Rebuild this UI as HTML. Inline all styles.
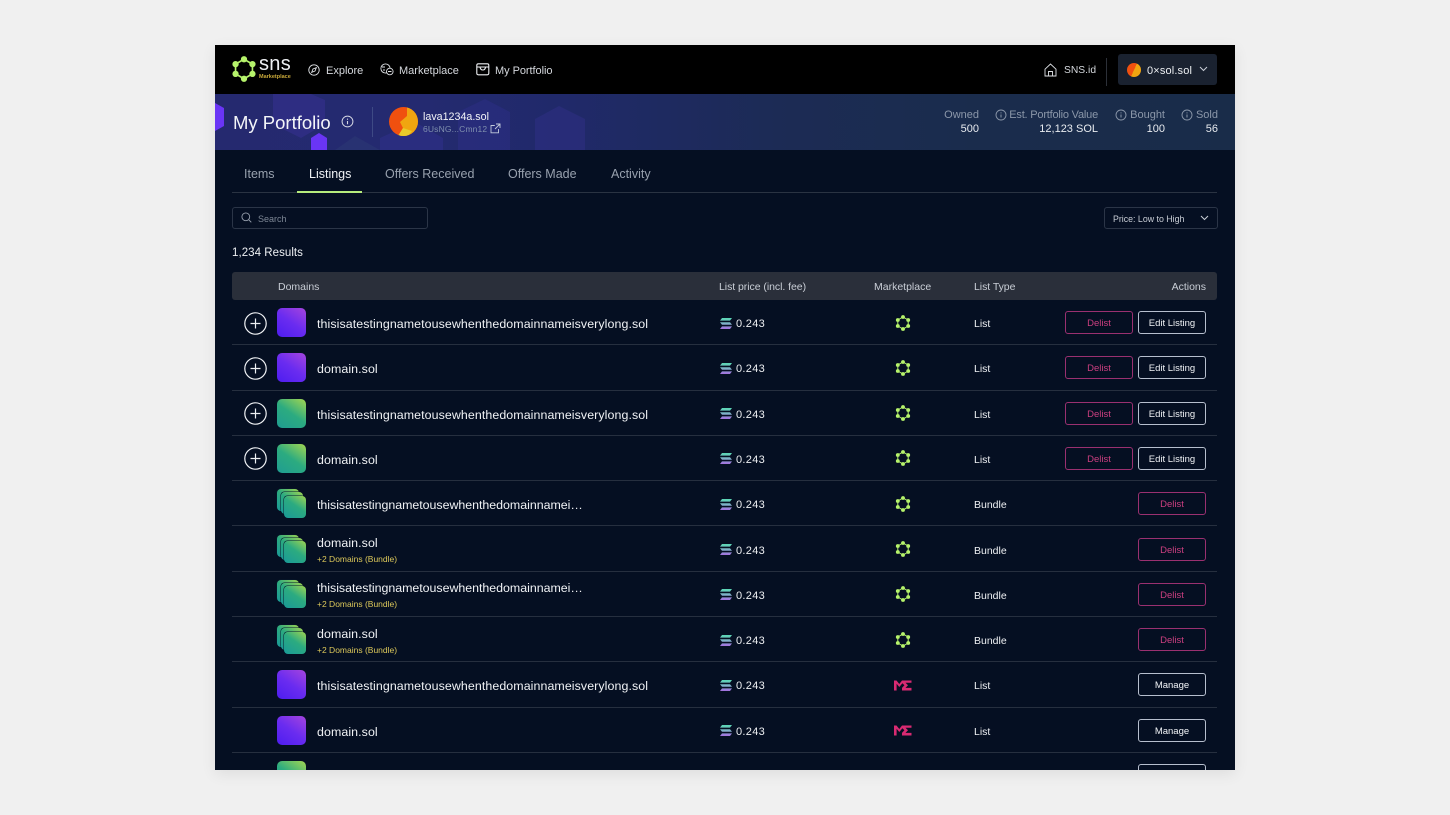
<!DOCTYPE html>
<html><head><meta charset="utf-8"><title>My Portfolio</title>
<style>
*{box-sizing:border-box;margin:0;padding:0}
html,body{width:1450px;height:815px;overflow:hidden;background:#f0f0f0;font-family:"Liberation Sans","DejaVu Sans",sans-serif}
.a{position:absolute;white-space:nowrap}
#p{position:absolute;left:215px;top:45px;width:1019.5px;height:725px;background:#050f22;overflow:hidden;box-shadow:0 4px 14px rgba(0,0,0,.08)}
#w{position:absolute;left:-215px;top:-45px;width:1450px;height:815px}
.nav{font-size:11px;color:#d5d8dd;line-height:14px}
.st{font-size:11px;color:#8b97a9;text-align:right;line-height:13px}
.sv{font-size:11px;color:#e8ebef;text-align:right;line-height:13px}
.tab{font-size:12.5px;color:#98a1ae;line-height:16px}
.th{font-size:10.5px;color:#c9ced6;line-height:14px;top:280px}
.r{position:absolute;left:232px;width:985px;height:45.3px;border-bottom:1.4px solid #262f3f}
.n{position:absolute;left:85px;font-size:12.4px;color:#f0f2f5;white-space:nowrap;line-height:16px;top:16px;letter-spacing:.085px}
.n.t{top:8.500px}
.n.e{letter-spacing:-.02px}
.b{position:absolute;left:85px;top:27.500px;font-size:8.500px;color:#dcc85a;white-space:nowrap;line-height:11px}
.pr{position:absolute;left:504px;top:17px;font-size:11px;color:#eef0f3;line-height:14px;letter-spacing:.3px}
.so{position:absolute;left:488px;top:17.500px;width:12px;height:11px}
.mk{position:absolute;left:663px;top:14.500px;width:16px;height:16px}
.me{position:absolute;left:662px;top:17.500px;width:18px;height:11px}
.ty{position:absolute;left:742px;top:17px;font-size:10.500px;color:#eef0f3;line-height:14px}
.plus{position:absolute;left:11.500px;top:11.500px;width:23px;height:23px}
.th1{position:absolute;left:45px;top:8px;width:29px;height:29px;border-radius:5px}
.pu{background:linear-gradient(35deg,#4d1df0 0%,#6a2cf0 50%,#a545dd 100%)}
.gr{background:linear-gradient(35deg,#1f9d92 0%,#2cab80 50%,#a3d651 100%)}
.s1,.s2,.s3{position:absolute;width:22px;height:22px;border-radius:4px;background:linear-gradient(35deg,#1a9a98 0%,#2cab80 55%,#9ed452 100%);box-shadow:-.5px -.5px 0 #071a2c}
.s1{left:45px;top:8px}.s2{left:48.500px;top:11px}.s3{left:52px;top:14.500px}
.btn{position:absolute;top:11px;height:23px;border-radius:3px;font-size:9.500px;text-align:center;line-height:21px;padding-top:1px;white-space:nowrap}
.de{border:1.200px solid #9a3070;color:#cc3f80}
.ed{border:1.200px solid #b7bfce;color:#f2f4f7}
.d1{left:833px;width:68px}.e1{left:906px;width:68px}
</style></head><body>
<svg width="0" height="0" style="position:absolute">
<defs>
<symbol id="hex" viewBox="0 0 24 24">
<polygon points="12,3 19.800,7.500 19.800,16.500 12,21 4.200,16.500 4.200,7.500" fill="none" stroke="#b6f36b" stroke-width="1.500"/>
<g fill="#b6f36b"><circle cx="12" cy="3" r="2.900"/><circle cx="19.800" cy="7.500" r="2.900"/><circle cx="19.800" cy="16.500" r="2.900"/><circle cx="12" cy="21" r="2.900"/><circle cx="4.200" cy="16.500" r="2.900"/><circle cx="4.200" cy="7.500" r="2.900"/></g>
</symbol>
<symbol id="me" viewBox="0 0 18 11">
<path d="M0 10.500V.5h2.500L5.300 4 8 .5h9.500v2.200H11.500L14 5.300 11.500 7.900h6v2.600H8V7.900L10.400 5.300 8.400 3.200 5.300 7 2.600 3.800v6.700z" fill="#d92a72"/>
</symbol>
<linearGradient id="sg" x1="0" y1="0" x2="0" y2="1"><stop offset="0" stop-color="#5ad8b4"/><stop offset=".5" stop-color="#7fb3c8"/><stop offset="1" stop-color="#a56fe0"/></linearGradient>
<symbol id="sol" viewBox="0 0 12 11">
<path d="M2 0h10l-2 2.600H0zM0 4.200h10l2 2.600H2zM2 8.400h10l-2 2.600H0z" fill="url(#sg)"/>
</symbol>
<symbol id="pl" viewBox="0 0 23 23">
<circle cx="11.500" cy="11.500" r="10.700" fill="none" stroke="#eef0f3" stroke-width="1.200"/>
<path d="M11.500 6.500v10M6.500 11.500h10" stroke="#eef0f3" stroke-width="1.200" fill="none"/>
</symbol>
<symbol id="inf" viewBox="0 0 12 12">
<circle cx="6" cy="6" r="5" fill="none" stroke="currentColor" stroke-width=".9"/>
<path d="M6 5.500v3M6 3.400v1" stroke="currentColor" stroke-width="1" fill="none"/>
</symbol>
</defs></svg>

<div id="p"><div id="w">
<!-- top bar -->
<div class="a" style="left:215px;top:45px;width:1020px;height:49px;background:#000"></div>
<svg class="a" style="left:231px;top:56px" width="26" height="26"><use href="#hex" width="26" height="26"/></svg>
<div class="a" style="left:259px;top:53px;font-size:20px;color:#eef0f3;line-height:22px;letter-spacing:.3px">sns</div>
<div class="a" style="left:259px;top:72.500px;font-size:5.500px;color:#c9a93a;line-height:8px;font-weight:bold">Marketplace</div>
<svg class="a" style="left:308px;top:64px" width="12" height="12" viewBox="0 0 12 12" fill="none" stroke="#dfe2e6" stroke-width=".9"><circle cx="6" cy="6" r="5.200"/><path d="M8.300 3.700L7 7 3.700 8.300 5 5z"/></svg>
<div class="a nav" style="left:326px;top:63.500px">Explore</div>
<svg class="a" style="left:380px;top:63px" width="14" height="13" viewBox="0 0 14 13" fill="none" stroke="#dfe2e6" stroke-width=".9"><circle cx="5.500" cy="5.500" r="4.600"/><circle cx="9.800" cy="8.500" r="3.300" fill="#000"/><path d="M8 8.500h3.500M2 4h3M3 7h2"/></svg>
<div class="a nav" style="left:399px;top:63.500px">Marketplace</div>
<svg class="a" style="left:476px;top:63px" width="14" height="13" viewBox="0 0 14 13" fill="none" stroke="#eef0f3" stroke-width="1.100"><rect x=".8" y=".8" width="12" height="11" rx="1.500"/><path d="M.8 4h12M4 4.200c.5 2 1.500 2.800 2.800 2.800s2.300-.8 2.800-2.800"/></svg>
<div class="a nav" style="left:495px;top:63.500px;letter-spacing:-.05px">My Portfolio</div>
<svg class="a" style="left:1044px;top:63px" width="13" height="14" viewBox="0 0 13 14" fill="none" stroke="#dfe2e6" stroke-width=".9"><path d="M1 6.200L6.500 1 12 6.200V13H1zM4.500 13V8.500h4V13"/></svg>
<div class="a nav" style="left:1064px;top:63.500px;font-size:10.300px">SNS.id</div>
<div class="a" style="left:1106px;top:58px;width:1px;height:28px;background:#2c3038"></div>
<div class="a" style="left:1118px;top:54px;width:99px;height:31px;border-radius:3px;background:#1a2230"></div>
<div class="a" style="left:1127px;top:63px;width:14px;height:14px;border-radius:50%;background:linear-gradient(115deg,#f0500f 50%,#f0a510 50%)"></div>
<div class="a nav" style="left:1147px;top:63.500px;color:#eef0f3;letter-spacing:.15px">0×sol.sol</div>
<svg class="a" style="left:1199px;top:66px" width="9" height="6" viewBox="0 0 9 6" fill="none" stroke="#c9ced6" stroke-width="1"><path d="M1 1l3.500 3.500L8 1"/></svg>

<!-- banner -->
<div class="a" style="left:215px;top:94px;width:1020px;height:56px;overflow:hidden;background:linear-gradient(90deg,#25296f 0%,#242a70 20%,#20296a 34%,#1c2b55 55%,#1a2c4c 75%,#192c49 100%)">
<svg width="1020" height="56" style="position:absolute;left:0;top:0">
<polygon points="-8,14 0,9 9,14 9,32 0,37 -8,32" fill="#6a35f5"/>
<polygon points="58,0 96,0 110,6 110,30 86,44 58,30" fill="#35308f" opacity=".6"/>
<polygon points="96,44 104,39 112,44 112,56 96,56" fill="#6a35f5"/>
<polygon points="165,44 200,28 228,44 228,56 165,56" fill="#333192" opacity=".45"/>
<polygon points="243,18 270,5 295,18 295,56 243,56" fill="#2f2f8a" opacity=".45"/>
<polygon points="320,25 344,12 370,25 370,56 320,56" fill="#34328f" opacity=".4"/>
<polygon points="120,56 140,42 165,56" fill="#2c3a74" opacity=".5"/>
</svg>
</div>
<div class="a" style="left:233px;top:112px;font-size:18.500px;color:#f3f5f8;line-height:22px">My Portfolio</div>
<svg class="a" style="left:341px;top:115px;color:#d5d8e4" width="13" height="13"><use href="#inf" width="13" height="13"/></svg>
<div class="a" style="left:372px;top:107px;width:1px;height:30px;background:#3e4a85"></div>
<div class="a" style="left:389px;top:107px;width:29px;height:29px;border-radius:50%;overflow:hidden;background:#f0500f">
<svg width="29" height="29"><path d="M18 0L29 0V29H9L14 21 11 15 18 9z" fill="#f0a510"/><path d="M9 29L14 21 23 24 19 29z" fill="#e8cb2a"/></svg></div>
<div class="a" style="left:423px;top:110px;font-size:10.700px;color:#f3f5f8;line-height:14px">lava1234a.sol</div>
<div class="a" style="left:423px;top:123px;font-size:8.500px;color:#7f8fae;line-height:12px;letter-spacing:.15px">6UsNG...Cmn12</div>
<svg class="a" style="left:490px;top:123px" width="11" height="11" viewBox="0 0 11 11" fill="none" stroke="#c3cbdc" stroke-width=".9"><path d="M8.500 6v3.800H1V2.500h3.800M6 1h4v4M10 1L5 6"/></svg>

<div class="a st" style="right:471px;top:109px">Owned</div><div class="a sv" style="right:471px;top:123px">500</div>
<div class="a st" style="right:352px;top:109px;letter-spacing:-.2px">Est. Portfolio Value</div><div class="a sv" style="right:352px;top:123px">12,123 SOL</div>
<svg class="a" style="left:995px;top:109px;color:#8b97a9" width="12" height="12"><use href="#inf" width="12" height="12"/></svg>
<div class="a st" style="right:285px;top:109px">Bought</div><div class="a sv" style="right:285px;top:123px">100</div>
<svg class="a" style="left:1115px;top:109px;color:#8b97a9" width="12" height="12"><use href="#inf" width="12" height="12"/></svg>
<div class="a st" style="right:232px;top:109px">Sold</div><div class="a sv" style="right:232px;top:123px">56</div>
<svg class="a" style="left:1181px;top:109px;color:#8b97a9" width="12" height="12"><use href="#inf" width="12" height="12"/></svg>

<!-- tabs -->
<div class="a tab" style="left:244px;top:166px">Items</div>
<div class="a tab" style="left:309px;top:166px;color:#f0f2f5">Listings</div>
<div class="a tab" style="left:385px;top:166px">Offers Received</div>
<div class="a tab" style="left:508px;top:166px">Offers Made</div>
<div class="a tab" style="left:611px;top:166px">Activity</div>
<div class="a" style="left:232px;top:192px;width:985px;height:1px;background:#2a3342"></div>
<div class="a" style="left:297px;top:191px;width:65px;height:1.500px;background:#b6ec7c"></div>

<!-- search -->
<div class="a" style="left:232px;top:207px;width:196px;height:22px;border:1px solid #2b3547;border-radius:3px"></div>
<svg class="a" style="left:241px;top:212px" width="11" height="11" viewBox="0 0 11 11" fill="none" stroke="#98a1ae" stroke-width=".9"><circle cx="4.800" cy="4.800" r="3.900"/><path d="M7.800 7.800l2.500 2.500"/></svg>
<div class="a" style="left:258px;top:212.500px;font-size:9px;color:#7d8795;line-height:12px">Search</div>
<div class="a" style="left:1104px;top:207px;width:114px;height:22px;border:1px solid #2b3547;border-radius:3px"></div>
<div class="a" style="left:1113px;top:212.500px;font-size:8.800px;color:#c9ced6;line-height:12px">Price: Low to High</div>
<svg class="a" style="left:1200px;top:215px" width="9" height="6" viewBox="0 0 9 6" fill="none" stroke="#c9ced6" stroke-width="1"><path d="M1 1l3.500 3.500L8 1"/></svg>
<div class="a" style="left:232px;top:246px;font-size:11.500px;color:#eef0f3;line-height:14px;letter-spacing:.05px">1,234 Results</div>

<!-- table head -->
<div class="a" style="left:232px;top:272px;width:985px;height:28px;border-radius:3px;background:#2a2f3a"></div>
<div class="a th" style="left:278px">Domains</div>
<div class="a th" style="left:719px;letter-spacing:-.05px">List price (incl. fee)</div>
<div class="a th" style="left:874px">Marketplace</div>
<div class="a th" style="left:974px;letter-spacing:-.05px">List Type</div>
<div class="a th" style="right:244px">Actions</div>

<!-- rows -->
<div class="r" style="top:300px"><svg class="plus"><use href="#pl"/></svg><div class="th1 pu"></div><div class="n">thisisatestingnametousewhenthedomainnameisverylong.sol</div><svg class="so"><use href="#sol"/></svg><div class="pr">0.243</div><svg class="mk"><use href="#hex" width="16" height="16"/></svg><div class="ty">List</div><div class="btn de d1">Delist</div><div class="btn ed e1">Edit Listing</div></div>
<div class="r" style="top:345.300px"><svg class="plus"><use href="#pl"/></svg><div class="th1 pu"></div><div class="n">domain.sol</div><svg class="so"><use href="#sol"/></svg><div class="pr">0.243</div><svg class="mk"><use href="#hex" width="16" height="16"/></svg><div class="ty">List</div><div class="btn de d1">Delist</div><div class="btn ed e1">Edit Listing</div></div>
<div class="r" style="top:390.600px"><svg class="plus"><use href="#pl"/></svg><div class="th1 gr"></div><div class="n">thisisatestingnametousewhenthedomainnameisverylong.sol</div><svg class="so"><use href="#sol"/></svg><div class="pr">0.243</div><svg class="mk"><use href="#hex" width="16" height="16"/></svg><div class="ty">List</div><div class="btn de d1">Delist</div><div class="btn ed e1">Edit Listing</div></div>
<div class="r" style="top:435.900px"><svg class="plus"><use href="#pl"/></svg><div class="th1 gr"></div><div class="n">domain.sol</div><svg class="so"><use href="#sol"/></svg><div class="pr">0.243</div><svg class="mk"><use href="#hex" width="16" height="16"/></svg><div class="ty">List</div><div class="btn de d1">Delist</div><div class="btn ed e1">Edit Listing</div></div>
<div class="r" style="top:481.200px"><div class="s1"></div><div class="s2"></div><div class="s3"></div><div class="n e">thisisatestingnametousewhenthedomainnamei…</div><svg class="so"><use href="#sol"/></svg><div class="pr">0.243</div><svg class="mk"><use href="#hex" width="16" height="16"/></svg><div class="ty">Bundle</div><div class="btn de e1">Delist</div></div>
<div class="r" style="top:526.500px"><div class="s1"></div><div class="s2"></div><div class="s3"></div><div class="n t">domain.sol</div><div class="b">+2 Domains (Bundle)</div><svg class="so"><use href="#sol"/></svg><div class="pr">0.243</div><svg class="mk"><use href="#hex" width="16" height="16"/></svg><div class="ty">Bundle</div><div class="btn de e1">Delist</div></div>
<div class="r" style="top:571.800px"><div class="s1"></div><div class="s2"></div><div class="s3"></div><div class="n t e">thisisatestingnametousewhenthedomainnamei…</div><div class="b">+2 Domains (Bundle)</div><svg class="so"><use href="#sol"/></svg><div class="pr">0.243</div><svg class="mk"><use href="#hex" width="16" height="16"/></svg><div class="ty">Bundle</div><div class="btn de e1">Delist</div></div>
<div class="r" style="top:617.100px"><div class="s1"></div><div class="s2"></div><div class="s3"></div><div class="n t">domain.sol</div><div class="b">+2 Domains (Bundle)</div><svg class="so"><use href="#sol"/></svg><div class="pr">0.243</div><svg class="mk"><use href="#hex" width="16" height="16"/></svg><div class="ty">Bundle</div><div class="btn de e1">Delist</div></div>
<div class="r" style="top:662.400px"><div class="th1 pu"></div><div class="n">thisisatestingnametousewhenthedomainnameisverylong.sol</div><svg class="so"><use href="#sol"/></svg><div class="pr">0.243</div><svg class="me"><use href="#me" width="18" height="11"/></svg><div class="ty">List</div><div class="btn ed e1">Manage</div></div>
<div class="r" style="top:707.700px"><div class="th1 pu"></div><div class="n">domain.sol</div><svg class="so"><use href="#sol"/></svg><div class="pr">0.243</div><svg class="me"><use href="#me" width="18" height="11"/></svg><div class="ty">List</div><div class="btn ed e1">Manage</div></div>
<div class="r" style="top:753px;border:0"><div class="th1 gr"></div><div class="btn ed e1"></div></div>
</div></div>
</body></html>
